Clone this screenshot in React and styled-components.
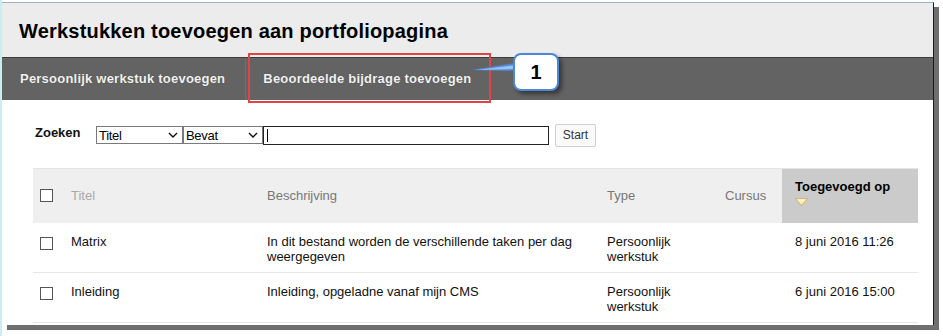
import React from "react";
import styled, { createGlobalStyle } from "styled-components";

const Global = createGlobalStyle`
  html, body { margin: 0; padding: 0; background: #fff; }
  body { font-family: "Liberation Sans", Arial, sans-serif; font-size: 13px; color: #111; }
  #root { width: 943px; height: 336px; overflow: hidden; position: relative; }
`;

const Stage = styled.div`
  position: relative;
  width: 943px;
  height: 336px;
  padding: 2px 0 0 2px;
  box-sizing: border-box;
  background: linear-gradient(to right, #c8eef4 0, #c8eef4 2px, #fff 2px);
`;

const Frame = styled.div`
  width: 932px;
  height: 323px;
  box-sizing: border-box;
  border-top: 1px solid #9fb0c0;
  border-right: 1px solid #1a1a1a;
  background: #fff;
  box-shadow: 5px 5px 0 #6f6f6f;
  display: flex;
  flex-direction: column;
`;

const Header = styled.div`
  height: 54px;
  background: #ececec;
  display: flex;
  align-items: center;
  padding-left: 17px;
  padding-top: 3px;
  box-sizing: border-box;
`;

const Title = styled.h1`
  margin: 0;
  font-size: 20px;
  font-weight: bold;
  color: #000;
  letter-spacing: 0.2px;
`;

const Nav = styled.nav`
  height: 43px;
  box-sizing: border-box;
  border-top: 1px solid #3c3c3c;
  background: #636363;
  display: flex;
  align-items: stretch;
`;

const NavItem = styled.div`
  display: flex;
  align-items: center;
  padding: 0 ${(p) => p.$pr || 18}px 1px ${(p) => p.$pl || 18}px;
  color: #f2f2f2;
  font-weight: bold;
  font-size: 13px;
  letter-spacing: 0.22px;
  text-shadow: 0 0 1px rgba(0,0,0,0.4);
  border-right: ${(p) => (p.$sep ? "1px solid #6e6e6e" : "none")};
`;

const Content = styled.div`
  padding: 0 15px 0 31px;
  display: flex;
  flex-direction: column;
`;

const SearchRow = styled.div`
  display: flex;
  align-items: center;
  height: 24px;
  margin-top: 23px;
  padding-left: 2px;
`;

const SearchLabel = styled.span`
  font-weight: bold;
  font-size: 13px;
  color: #111;
  width: 61px;
  margin-top: -5px;
`;

const Select = styled.div`
  width: ${(p) => p.$w}px;
  height: 18px;
  box-sizing: border-box;
  border: 1px solid #7a7a7a;
  display: flex;
  align-items: center;
  justify-content: space-between;
  padding: 0 4px 0 2px;
  font-size: 13px;
  color: #000;
  background: #fff;
  letter-spacing: -0.3px;
`;

const TextInput = styled.div`
  width: 286px;
  height: 19px;
  box-sizing: border-box;
  border: 1px solid #222;
  background: #fff;
  display: flex;
  align-items: center;
  padding-left: 3px;
`;

const Caret = styled.span`
  width: 1px;
  height: 13px;
  background: #000;
`;

const StartButton = styled.button`
  margin-left: 6px;
  height: 23px;
  width: 41px;
  box-sizing: border-box;
  border: 1px solid #cfcfcf;
  border-radius: 2px;
  background: #fafafa;
  font-family: "Liberation Sans", Arial, sans-serif;
  font-size: 12px;
  color: #333;
  padding: 0;
`;

const Table = styled.table`
  margin-top: 21px;
  width: 885px;
  border-collapse: collapse;
  table-layout: fixed;
`;

const Th = styled.th`
  height: 54px;
  box-sizing: border-box;
  background: ${(p) => (p.$sorted ? "#cbcbcb" : "#efefef")};
  text-align: left;
  vertical-align: middle;
  font-weight: ${(p) => (p.$sorted ? "bold" : "normal")};
  color: ${(p) => (p.$sorted ? "#000" : p.$light ? "#a8a8a8" : "#777")};
  font-size: 13px;
  padding: 0 0 0 ${(p) => p.$pl || 0}px;
  border-top: 1px solid #e4e4e4;
`;

const Td = styled.td`
  vertical-align: top;
  padding: 11px 4px 8px ${(p) => p.$pl || 0}px;
  line-height: 15px;
  font-size: 13px;
  color: #111;
  border-bottom: 1px solid #e6e6e6;
`;

const Box = styled.span`
  display: block;
  width: 13px;
  height: 13px;
  box-sizing: border-box;
  border: 1px solid #555;
  background: #fff;
  margin-top: ${(p) => p.$mt || 0}px;
`;

const SortHead = styled.div`
  display: flex;
  flex-direction: column;
  gap: 4px;
  margin-top: -5px;
`;

const Highlight = styled.div`
  position: absolute;
  left: 248px;
  top: 53px;
  width: 243px;
  height: 50px;
  box-sizing: border-box;
  border: 2px solid #e04444;
`;

const Callout = styled.div`
  position: absolute;
  left: 513px;
  top: 53px;
  width: 46px;
  height: 38px;
  box-sizing: border-box;
  border: 2px solid #4d88d6;
  border-radius: 8px;
  background: #fff;
  box-shadow: 3px 3px 4px rgba(0,0,0,0.45);
  display: flex;
  align-items: center;
  justify-content: center;
  font-weight: bold;
  font-size: 20px;
  color: #000;
`;

const Pointer = styled.svg`
  position: absolute;
  left: 468px;
  top: 58px;
  overflow: visible;
`;

const Chevron = () => (
  <svg width="10" height="7" viewBox="0 0 10 7">
    <path d="M1 1 L5 5 L9 1" fill="none" stroke="#111" strokeWidth="1.4" />
  </svg>
);

const rows = [
  {
    t: "Matrix",
    d: "In dit bestand worden de verschillende taken per dag weergegeven",
    ty: "Persoonlijk werkstuk",
    date: "8 juni 2016 11:26",
  },
  {
    t: "Inleiding",
    d: "Inleiding, opgeladne vanaf mijn CMS",
    ty: "Persoonlijk werkstuk",
    date: "6 juni 2016 15:00",
  },
];

export default function App() {
  return (
    <>
      <Global />
      <Stage>
        <Frame>
          <Header>
            <Title>Werkstukken toevoegen aan portfoliopagina</Title>
          </Header>
          <Nav>
            <NavItem $pl={18} $pr={20} $sep>Persoonlijk werkstuk toevoegen</NavItem>
            <NavItem $pl={17}>Beoordeelde bijdrage toevoegen</NavItem>
          </Nav>
          <Content>
            <SearchRow>
              <SearchLabel>Zoeken</SearchLabel>
              <Select $w={87}>Titel<Chevron /></Select>
              <Select $w={80}>Bevat<Chevron /></Select>
              <TextInput><Caret /></TextInput>
              <StartButton>Start</StartButton>
            </SearchRow>
            <Table>
              <colgroup>
                <col style={{ width: 30 }} />
                <col style={{ width: 196 }} />
                <col style={{ width: 340 }} />
                <col style={{ width: 118 }} />
                <col style={{ width: 65 }} />
                <col style={{ width: 136 }} />
              </colgroup>
              <thead>
                <tr>
                  <Th $pl={7}><Box /></Th>
                  <Th $pl={8} $light>Titel</Th>
                  <Th $pl={8}>Beschrijving</Th>
                  <Th $pl={8}>Type</Th>
                  <Th $pl={8}>Cursus</Th>
                  <Th $pl={13} $sorted>
                    <SortHead>
                      <span>Toegevoegd op</span>
                      <svg width="13" height="9" viewBox="0 0 13 9">
                        <defs>
                          <linearGradient id="tri" x1="0" y1="0" x2="0" y2="1">
                            <stop offset="0" stopColor="#fffbe0" />
                            <stop offset="1" stopColor="#f3dc8c" />
                          </linearGradient>
                        </defs>
                        <path d="M0.7 0.7 L12.3 0.7 L6.5 7.8 Z" fill="url(#tri)" stroke="#c9a94e" strokeWidth="0.8" />
                      </svg>
                    </SortHead>
                  </Th>
                </tr>
              </thead>
              <tbody>
                {rows.map((r) => (
                  <tr key={r.t}>
                    <Td $pl={7}><Box $mt={3} /></Td>
                    <Td $pl={8}>{r.t}</Td>
                    <Td $pl={8}>{r.d}</Td>
                    <Td $pl={8}>{r.ty}</Td>
                    <Td $pl={8}></Td>
                    <Td $pl={13}>{r.date}</Td>
                  </tr>
                ))}
              </tbody>
            </Table>
          </Content>
        </Frame>
        <Highlight />
        <Pointer width="50" height="20">
          <path d="M3 12 L47 5 L47 13 Z" fill="#4d88d6" />
          <path d="M8 12 L47 7 L47 11 Z" fill="#9cc3f0" />
        </Pointer>
        <Callout>1</Callout>
      </Stage>
    </>
  );
}
